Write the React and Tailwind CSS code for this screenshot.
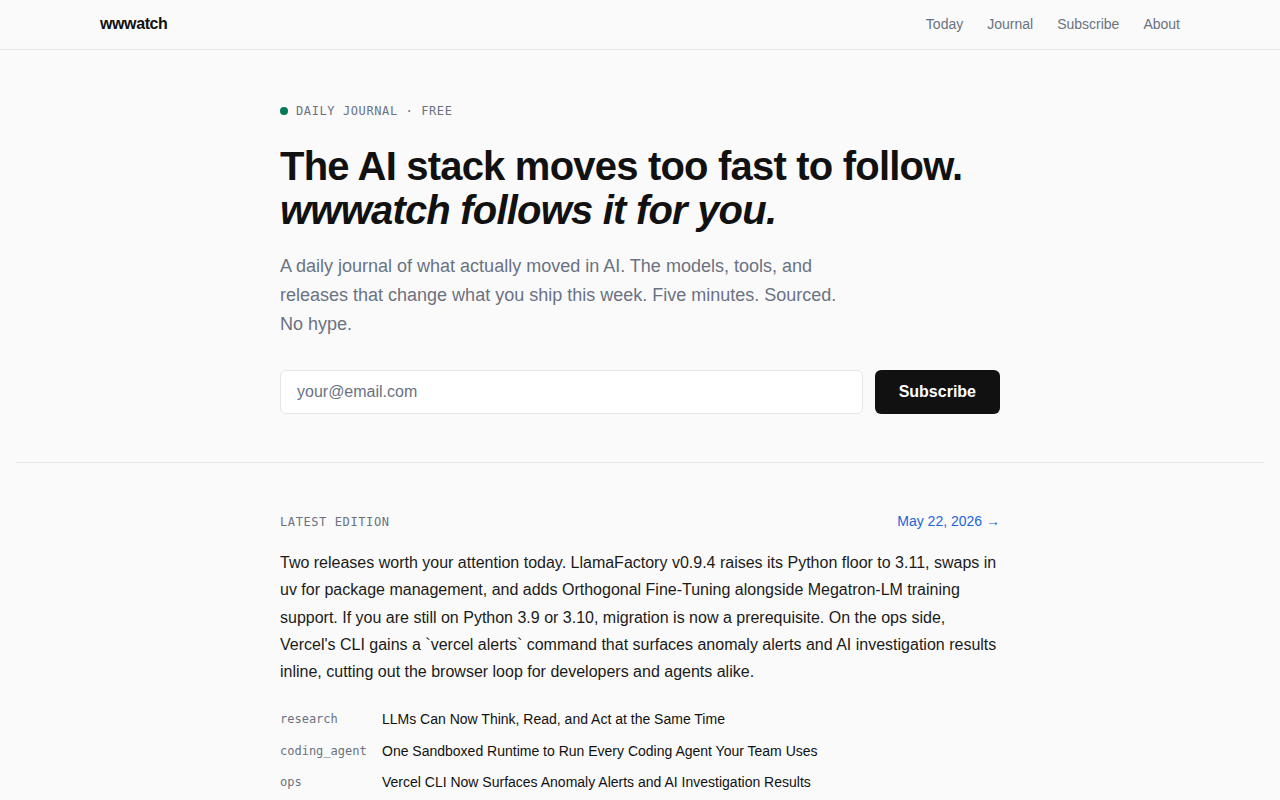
const stories = [
  { tag: 'research', title: 'LLMs Can Now Think, Read, and Act at the Same Time' },
  { tag: 'coding_agent', title: 'One Sandboxed Runtime to Run Every Coding Agent Your Team Uses' },
  { tag: 'ops', title: 'Vercel CLI Now Surfaces Anomaly Alerts and AI Investigation Results' },
]

const sans = "font-['Liberation_Sans',Arial,sans-serif]"
const mono = "font-['DejaVu_Sans_Mono','Liberation_Mono',monospace]"

export default function App() {
  return (
    <div className={`min-h-screen bg-[#fafafa] text-[#111] ${sans}`}>
      <header className="border-b border-gray-200">
        <div className="max-w-[1080px] mx-auto h-[49px] flex items-center justify-between">
          <a className="text-base font-bold tracking-tight text-[#111] -mt-px">wwwatch</a>
          <nav className="flex gap-6 text-sm text-gray-500 -mt-0.5">
            <a>Today</a>
            <a>Journal</a>
            <a>Subscribe</a>
            <a>About</a>
          </nav>
        </div>
      </header>

      <main className="px-4">
        <section className="max-w-[720px] mx-auto pt-[53px] pb-12">
          <div className={`flex items-center gap-2 text-xs tracking-wider text-gray-500 ${mono}`}>
            <span className="w-2 h-2 rounded-full bg-[#047857]"></span>
            DAILY JOURNAL · FREE
          </div>
          <h1 className="mt-[25px] text-[40px] leading-[44px] font-bold tracking-[-0.02em] text-[#111]">
            The AI stack moves too fast to follow.
            <br />
            <em>wwwatch follows it for you.</em>
          </h1>
          <p className="mt-[20px] max-w-[560px] text-lg leading-[29px] text-gray-500">
            A daily journal of what actually moved in AI. The models, tools, and releases that
            change what you ship this week. Five minutes. Sourced. No hype.
          </p>
          <form className="mt-[31px] flex gap-3" onSubmit={e => e.preventDefault()}>
            <input
              type="email"
              placeholder="your@email.com"
              className="flex-1 h-11 px-4 rounded-md border border-gray-200 bg-white text-base placeholder:text-gray-500 outline-none"
            />
            <button className="h-11 px-6 rounded-md bg-[#111] text-white text-base font-bold">
              Subscribe
            </button>
          </form>
        </section>

        <div className="border-t border-gray-200"></div>

        <section className="max-w-[720px] mx-auto pt-[48px] pb-10">
          <div className="flex items-baseline justify-between">
            <h2 className={`text-xs tracking-wider text-gray-500 ${mono}`}>LATEST EDITION</h2>
            <a className="text-sm text-[#1d64d8]">
              May 22, 2026 <span>→</span>
            </a>
          </div>
          <p className="mt-[18px] text-base leading-[27.3px] text-[#1a1a1a]">
            Two releases worth your attention today. LlamaFactory v0.9.4 raises its Python floor to
            3.11, swaps in uv for package management, and adds Orthogonal Fine-Tuning alongside
            Megatron-LM training support. If you are still on Python 3.9 or 3.10, migration is now a
            prerequisite. On the ops side, Vercel's CLI gains a `vercel alerts` command that surfaces
            anomaly alerts and AI investigation results inline, cutting out the browser loop for
            developers and agents alike.
          </p>
          <ul className="mt-[18px] flex flex-col">
            {stories.map(s => (
              <li key={s.tag} className="flex items-center h-[31.5px]">
                <span className={`w-[102px] shrink-0 text-xs text-gray-500 ${mono}`}>{s.tag}</span>
                <span className="text-sm text-[#111]">{s.title}</span>
              </li>
            ))}
          </ul>
        </section>
      </main>
    </div>
  )
}
